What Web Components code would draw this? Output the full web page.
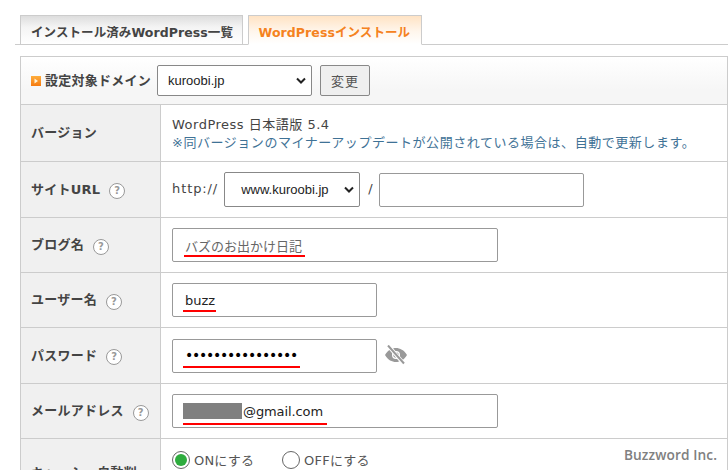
<!DOCTYPE html>
<html lang="ja">
<head>
<meta charset="utf-8">
<title>WordPressインストール</title>
<style>
	html, body {
		margin: 0;
		height: 470px;
		overflow: hidden;
		background: #fff;
		color: #444;
		font-family: "DejaVu Sans", "Noto Sans CJK JP", sans-serif;
		font-size: 13px;
	}
	.page {
		padding: 15px 0 0 20px;
	}
</style>
</head>
<body>

<div class="page">
	<tab-bar>
		<tab-item>インストール済みWordPress一覧</tab-item>
		<tab-item active>WordPressインストール</tab-item>
	</tab-bar>

	<form-panel>
		<domain-bar slot="head" value="kuroobi.jp"></domain-bar>

		<form-row label="バージョン" height="57">
			<div style="line-height:18px;padding-top:1px">
				<div style="letter-spacing:.5px">WordPress 日本語版 5.4</div>
				<div style="color:#3f7296;letter-spacing:.54px">※同バージョンのマイナーアップデートが公開されている場合は、自動で更新します。</div>
			</div>
		</form-row>

		<form-row label="サイトURL" help height="56">
			<div style="display:flex;align-items:center;gap:6px">
				<span style="letter-spacing:.9px;margin-top:-2px">http://</span>
				<select-box value="www.kuroobi.jp" width="136" center></select-box>
				<span style="margin:-2px 1px 0 2px;width:4px">/</span>
				<text-field width="205"></text-field>
			</div>
		</form-row>

		<form-row label="ブログ名" help height="55">
			<text-field width="326" value="バズのお出かけ日記" mark="121" mark-left="11" muted></text-field>
		</form-row>

		<form-row label="ユーザー名" help height="55">
			<text-field width="205" value="buzz" mark="33"></text-field>
		</form-row>

		<form-row label="パスワード" help height="56">
			<div style="display:flex;align-items:center;gap:8px">
				<text-field width="205" value="••••••••••••••••" mark="117" dots></text-field>
				<eye-off></eye-off>
			</div>
		</form-row>

		<form-row label="メールアドレス" help height="55">
			<text-field width="326" value="@gmail.com" mark="144" mark-bottom="2" masked></text-field>
		</form-row>

		<form-row label="キャッシュ自動削" height="68" last>
			<div style="display:flex;gap:28px;align-self:flex-start;padding-top:11px">
				<radio-opt checked>ONにする</radio-opt>
				<radio-opt>OFFにする</radio-opt>
			</div>
		</form-row>
	</form-panel>
</div>

<water-mark>Buzzword Inc.</water-mark>

<script>
(function(){

	class TabBar extends HTMLElement {
		constructor() {
			super();
			this.attachShadow({mode: "open"}).innerHTML = `
				<style>
					:host {
						display: flex;
						gap: 5px;
						margin-left: -5px;
						padding-left: 5px;
						border-bottom: 1px solid #ccc;
						height: 29px;
					}
				</style>
				<slot></slot>
			`;
		}
	}
	customElements.define("tab-bar", TabBar);

	class TabItem extends HTMLElement {
		constructor() {
			super();
			this.attachShadow({mode: "open"}).innerHTML = `
				<style>
					:host {
						display: flex;
						align-items: center;
						height: 30px;
						box-sizing: border-box;
						padding: 2px 8.5px 0 10px;
						border: 1px solid #ccc;
						font-weight: bold;
						font-size: 12.5px;
						letter-spacing: .08px;
						color: #444;
						background: linear-gradient(#ddd, #f4f4f4 40%, #fff);
						margin-bottom: -1px;
					}
					:host([active]) {
						padding-right: 10.5px;
						color: #f58220;
						background: linear-gradient(#ffe3c4, #fff6ec 55%, #fff);
						border-bottom-color: #fff;
					}
				</style>
				<slot></slot>
			`;
		}
	}
	customElements.define("tab-item", TabItem);

	class FormPanel extends HTMLElement {
		constructor() {
			super();
			this.attachShadow({mode: "open"}).innerHTML = `
				<style>
					:host {
						display: block;
						margin-top: 11px;
						border: 1px solid #ccc;
						border-bottom: 0;
						width: 708px;
						box-sizing: border-box;
					}
				</style>
				<slot name="head"></slot>
				<slot></slot>
			`;
		}
	}
	customElements.define("form-panel", FormPanel);

	class DomainBar extends HTMLElement {
		constructor() {
			super();
			this.attachShadow({mode: "open"}).innerHTML = `
				<style>
					:host {
						display: flex;
						align-items: center;
						height: 48px;
						box-sizing: border-box;
						padding-left: 10px;
						border-bottom: 1px solid #ccc;
						background: linear-gradient(#fff, #f6f6f6 70%);
					}
					.mark { display: block; width: 10px; height: 10px; margin: 1px 4px 0 0; }
					.label { font-weight: bold; font-size: 13px; color: #444; width: 112px; white-space: nowrap; letter-spacing: .25px; padding-bottom: 2px; }
					.go {
						display: flex;
						align-items: center;
						justify-content: center;
						width: 50px;
						height: 31px;
						box-sizing: border-box;
						margin-left: 8px;
						border: 1px solid #888;
						border-radius: 2px;
						background: #efefef;
						color: #555;
						letter-spacing: 1px;
					}
				</style>
				<svg class="mark" viewBox="0 0 10 10">
					<defs><linearGradient id="g" x1="0" y1="0" x2="0" y2="1"><stop offset="0" stop-color="#ffae3d"/><stop offset="1" stop-color="#f57a10"/></linearGradient></defs>
					<rect width="10" height="10" fill="url(#g)"/>
					<path d="M3.5 2.5 L7 5 L3.5 7.5 Z" fill="#fff3d8"/>
				</svg>
				<span class="label">設定対象ドメイン</span>
				<select-box value="${this.getAttribute("value")}" width="155"></select-box>
				<span class="go">変更</span>
			`;
		}
	}
	customElements.define("domain-bar", DomainBar);

	class SelectBox extends HTMLElement {
		constructor() {
			super();
			var w = this.getAttribute("width");
			this.attachShadow({mode: "open"}).innerHTML = `
				<style>
					:host {
						display: flex;
						align-items: center;
						width: ${w}px;
						height: 31px;
						box-sizing: border-box;
						padding: 0 5px 0 10px;
						border: 1px solid #888;
						border-radius: 2px;
						background: #fff;
						color: #222;
						font-family: "Liberation Sans", sans-serif;
						font-size: 13px;
					}
					:host([center]) { height: 35px; padding-left: 16px; }
					span { flex: 1; }
					svg { display: block; width: 10px; height: 7px; }
				</style>
				<span>${this.getAttribute("value")}</span>
				<svg viewBox="0 0 10 7"><path d="M1 1.5 L5 5.5 L9 1.5" fill="none" stroke="#222" stroke-width="2"/></svg>
			`;
		}
	}
	customElements.define("select-box", SelectBox);

	class FormRow extends HTMLElement {
		constructor() {
			super();
			var help = this.hasAttribute("help") ? "<help-mark></help-mark>" : "";
			this.attachShadow({mode: "open"}).innerHTML = `
				<style>
					:host {
						display: grid;
						grid-template-columns: 140px 1fr;
						height: ${this.getAttribute("height")}px;
						box-sizing: border-box;
						border-bottom: 1px solid #ccc;
					}
					:host([last]) { border-bottom: 0; }
					.label {
						display: flex;
						align-items: center;
						gap: 9px;
						padding: 0 0 3px 10px;
						background: #f0f0f0;
						border-right: 1px solid #ccc;
						font-weight: bold;
						font-size: 13px;
						color: #444;
						white-space: nowrap;
						letter-spacing: .25px;
					}
					.cell {
						display: flex;
						align-items: center;
						padding-left: 11px;
					}
					help-mark { margin-top: 6px; }
				</style>
				<div class="label"><span>${this.getAttribute("label")}</span>${help}</div>
				<div class="cell"><slot></slot></div>
			`;
		}
	}
	customElements.define("form-row", FormRow);

	class HelpMark extends HTMLElement {
		constructor() {
			super();
			this.attachShadow({mode: "open"}).innerHTML = `
				<style>
					:host {
						display: flex;
						align-items: center;
						justify-content: center;
						width: 16px;
						height: 16px;
						box-sizing: border-box;
						border: 1px solid #999;
						border-radius: 50%;
						background: #fff;
						color: #999;
						font-size: 10px;
						font-weight: bold;
						line-height: 1;
					}
				</style>
				?
			`;
		}
	}
	customElements.define("help-mark", HelpMark);

	class TextField extends HTMLElement {
		constructor() {
			super();
			var val = this.getAttribute("value") || "";
			var mark = this.getAttribute("mark");
			var left = this.getAttribute("mark-left") || 10;
			var bottom = this.getAttribute("mark-bottom") || 4;
			var masked = this.hasAttribute("masked") ? '<i class="mask"></i>' : "";
			var line = mark ? `<i class="line" style="width:${mark}px;left:${left}px;bottom:${bottom}px"></i>` : "";
			this.attachShadow({mode: "open"}).innerHTML = `
				<style>
					:host {
						display: flex;
						align-items: center;
						position: relative;
						width: ${this.getAttribute("width")}px;
						height: 34px;
						box-sizing: border-box;
						padding: 0 0 0 12px;
						border: 1px solid #999;
						border-radius: 2px;
						background: #fff;
						color: #222;
						font-size: 13px;
					}
					:host([muted]) { color: #666; }
					:host([masked]) { letter-spacing: -.1px; }
					:host([dots]) { font-size: 14px; letter-spacing: -1.26px; color: #000; padding-bottom: 1px; }
					.mask { display: block; width: 59px; height: 16px; background: #808080; margin-left: -2px; margin-right: 1px; }
					/* red hand-drawn annotation, sits over the field */
					.line { position: absolute; height: 2px; background: #f00; }
				</style>
				${masked}<span>${val}</span>${line}
			`;
		}
	}
	customElements.define("text-field", TextField);

	class EyeOff extends HTMLElement {
		constructor() {
			super();
			this.attachShadow({mode: "open"}).innerHTML = `
				<style>
					:host { display: block; width: 22px; height: 20px; margin-top: -1px; }
					svg { display: block; }
				</style>
				<svg width="22" height="20" viewBox="0 0 22 20">
					<path fill-rule="evenodd" fill="#999" d="M0 10 C3 5 7 3 11 3 C15 3 19 5 22 10 C19 15 15 17 11 17 C7 17 3 15 0 10 Z M11 6 A4 4 0 1 0 11 14 A4 4 0 1 0 11 6 Z"/>
					<circle cx="11" cy="10" r="2.7" fill="#999"/>
					<path d="M3.5 1 L19 19" stroke="#fff" stroke-width="4"/>
					<path d="M3 .5 L19 18.5" stroke="#999" stroke-width="2"/>
				</svg>
			`;
		}
	}
	customElements.define("eye-off", EyeOff);

	class RadioOpt extends HTMLElement {
		constructor() {
			super();
			this.attachShadow({mode: "open"}).innerHTML = `
				<style>
					:host {
						display: flex;
						align-items: center;
						gap: 4px;
						color: #555;
						font-size: 13px;
						letter-spacing: .2px;
					}
					.dot {
						display: flex;
						align-items: center;
						justify-content: center;
						width: 18px;
						height: 18px;
						box-sizing: border-box;
						border: 1px solid #666;
						border-radius: 50%;
						background: #fff;
					}
					:host([checked]) .dot::after {
						content: "";
						width: 12px;
						height: 12px;
						border-radius: 50%;
						background: #2eac3e;
					}
				</style>
				<span class="dot"></span>
				<slot></slot>
			`;
		}
	}
	customElements.define("radio-opt", RadioOpt);

	class WaterMark extends HTMLElement {
		constructor() {
			super();
			this.attachShadow({mode: "open"}).innerHTML = `
				<style>
					:host {
						position: absolute;
						right: 11px;
						top: 445px;
						font-family: "Open Sans", sans-serif;
						font-weight: 600;
						font-size: 13.7px;
						color: #808080;
						letter-spacing: .1px;
					}
				</style>
				<slot></slot>
			`;
		}
	}
	customElements.define("water-mark", WaterMark);

}())
</script>
</body>
</html>
